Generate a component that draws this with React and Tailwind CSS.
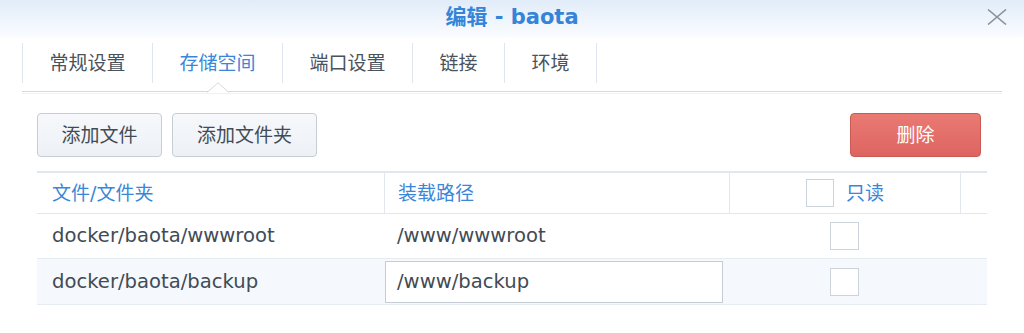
export default function App() {
  const font = { fontFamily: '"DejaVu Sans", "Noto Sans CJK SC", sans-serif' };
  const tabs = [
    ["常规设置", "w-[131px]"],
    ["存储空间", "w-[130px]"],
    ["端口设置", "w-[130px]"],
    ["链接", "w-[92px]"],
    ["环境", "w-[92px]"],
  ];
  return (
    <div className="w-[1024px] h-[333px] bg-white overflow-hidden" style={font}>
      {/* Title bar */}
      <div className="relative h-[38px] bg-gradient-to-b from-[#e1ecf9] to-[#fbfdff] flex items-center justify-center">
        <div className="text-[21px] font-bold text-[#3584d8] leading-none -mt-[4px]">编辑 - baota</div>
        <svg className="absolute left-[987px] top-[9px]" width="20" height="16" viewBox="0 0 20 16">
          <path d="M1 0.5 L19 15.5 M19 0.5 L1 15.5" stroke="#8c9299" strokeWidth="1.6" fill="none" />
        </svg>
      </div>

      {/* Tabs */}
      <div className="ml-[22px] w-[980px] mt-[5px]">
        <div className="flex h-[40px]">
          {tabs.map(([t, w], i) => (
            <div
              key={t}
              className={
                w +
                " flex items-center justify-center border-r border-[#dfe5ec] text-[19px] leading-none " +
                (i === 0 ? "border-l " : "") +
                (i === 1 ? "text-[#3a86d8]" : "text-[#4a535c]")
              }
            >
              {t}
            </div>
          ))}
        </div>
        <div className="relative mt-[8px] h-[2px] border-t border-[#d3d9e0] shadow-[0_1px_1px_rgba(0,0,0,0.06)]">
          <svg className="absolute left-[185px] -top-[10px]" width="22" height="11" viewBox="0 0 22 11">
            <path d="M0 10.5 L11 0.8 L22 10.5" fill="#ffffff" stroke="#d3d9e0" strokeWidth="1" />
          </svg>
        </div>
      </div>

      {/* Toolbar */}
      <div className="ml-[37px] w-[950px] mt-[20px] flex items-center">
        <button className="w-[125px] h-[44px] rounded-[4px] border border-[#c6cdd5] bg-gradient-to-b from-[#f6f8fb] to-[#edf1f6] text-[19px] text-[#414b55] leading-none">
          添加文件
        </button>
        <button className="ml-[10px] w-[145px] h-[44px] rounded-[4px] border border-[#c6cdd5] bg-gradient-to-b from-[#f6f8fb] to-[#edf1f6] text-[19px] text-[#414b55] leading-none">
          添加文件夹
        </button>
        <div className="flex-1" />
        <button className="mr-[6px] w-[131px] h-[44px] rounded-[4px] border border-[#cb5a55] bg-gradient-to-b from-[#ea7a73] to-[#dd6561] text-[19px] text-white leading-none">
          删除
        </button>
      </div>

      {/* Table */}
      <div className="ml-[37px] w-[950px] mt-[14px]">
        <div className="grid grid-cols-[347px_345px_231px_27px] h-[43px] border-t-2 border-b border-[#e1e7ee]">
          <div className="flex items-center pl-[15px] text-[19px] text-[#3a86d8] leading-none">文件/文件夹</div>
          <div className="flex items-center pl-[13px] border-l border-[#e1e7ee] text-[19px] text-[#3a86d8] leading-none">装载路径</div>
          <div className="flex items-center justify-center gap-[12px] border-l border-[#e1e7ee]">
            <div className="w-[28px] h-[28px] border-[1.5px] border-[#cdd3da] bg-white" />
            <span className="text-[19px] text-[#3a86d8] leading-none">只读</span>
          </div>
          <div className="border-l border-[#e1e7ee]" />
        </div>

        <div className="grid grid-cols-[347px_345px_231px_27px] h-[45px] border-b border-[#e6ebf1] bg-white">
          <div className="flex items-center pl-[15px] text-[19.6px] text-[#414b55] leading-none">docker/baota/wwwroot</div>
          <div className="flex items-center pl-[13px] text-[19.6px] text-[#414b55] leading-none">/www/wwwroot</div>
          <div className="flex items-center justify-center">
            <div className="w-[29px] h-[28px] border-[1.5px] border-[#cdd3da] bg-white" />
          </div>
          <div />
        </div>

        <div className="grid grid-cols-[347px_345px_231px_27px] h-[46px] border-b border-[#e6ebf1] bg-[#f5f8fc]">
          <div className="flex items-center pl-[15px] text-[19.6px] text-[#414b55] leading-none">docker/baota/backup</div>
          <div className="flex items-center pl-[1px] pr-[6px]">
            <div className="w-full h-[42px] border-[1.5px] border-[#c5ccd4] bg-white flex items-center pl-[11px] text-[19.6px] text-[#414b55] leading-none">
              /www/backup
            </div>
          </div>
          <div className="flex items-center justify-center">
            <div className="w-[29px] h-[28px] border-[1.5px] border-[#cdd3da] bg-white" />
          </div>
          <div />
        </div>
      </div>
    </div>
  );
}
